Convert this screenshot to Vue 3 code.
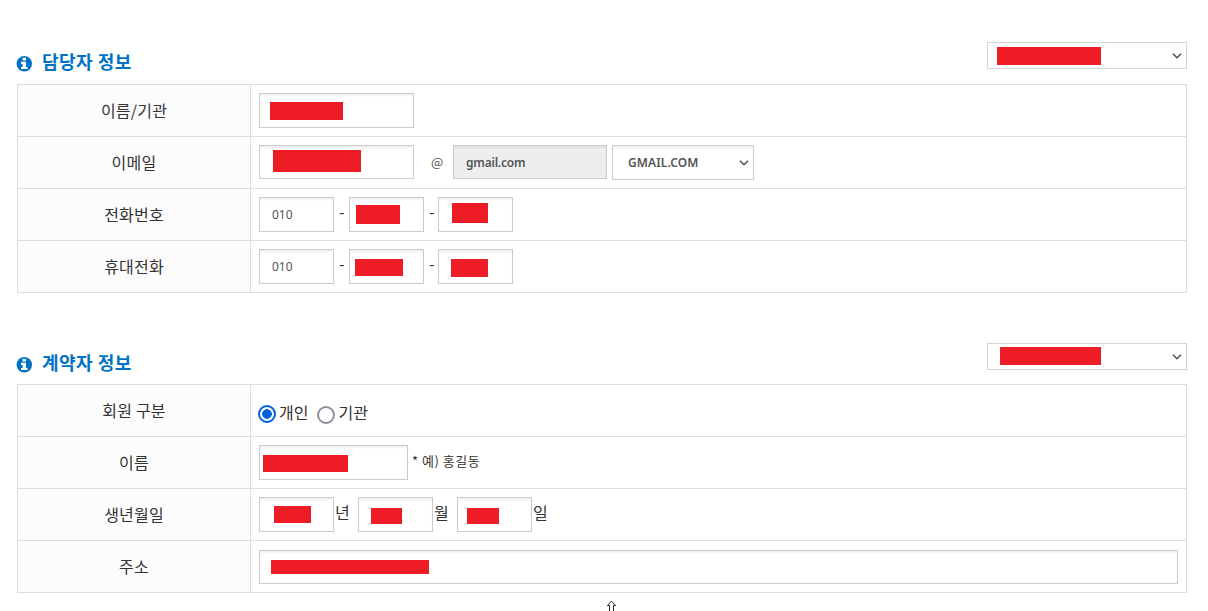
<template>
  <div class="page">
    <section v-for="s in sections" :key="s.title" class="section">
      <div class="head">
        <h2 class="title">
          <svg class="info" viewBox="0 0 16 16">
            <circle cx="8.3" cy="7.8" r="7.7" fill="#0072c6" />
            <path d="M6.6 1.8H10v2.6H6.6zM5 5.8h5V11h1.5v2.1H5V11h1.6V7.9H5z" fill="#fff" />
          </svg>
          <span>{{ s.title }}</span>
        </h2>
        <div class="picker">
          <i class="mask" :style="mask(s.mask)"></i>
          <svg class="arrow" viewBox="0 0 10 6"><path d="M1 .8l4 4 4-4" /></svg>
        </div>
      </div>
      <div class="table">
        <div v-for="row in s.rows" :key="row.label" class="row">
          <div class="label">{{ row.label }}</div>
          <div :class="['cell', row.type]">
            <template v-for="(i, n) in row.items" :key="n">
              <span v-if="i.text" :class="['text', i.type]">{{ i.text }}</span>
              <label v-else-if="i.radio" class="radio">
                <span :class="['dot', i.on ? 'on' : '']"></span>
                <span>{{ i.radio }}</span>
              </label>
              <div v-else :class="['field', i.type]">
                <i v-if="i.mask" class="mask" :style="mask(i.mask)"></i>
                <span v-else class="value">{{ i.value }}</span>
                <svg v-if="i.type == 'select'" class="arrow" viewBox="0 0 10 6"><path d="M1 .8l4 4 4-4" /></svg>
              </div>
            </template>
          </div>
        </div>
      </div>
    </section>
    <svg class="cursor" viewBox="0 0 11 12">
      <path d="M5.5 1.2L9.6 5.5H7.5V12h-4V5.5H1.4z" />
    </svg>
  </div>
</template>

<script setup>
// mask: [left, top, width, height]
const sections = [
  {
    title: '담당자 정보',
    mask: [9, 4, 104, 18],
    rows: [
      { label: '이름/기관', items: [{ type: 'id', mask: [10, 8, 73, 18] }] },
      {
        label: '이메일',
        items: [
          { type: 'id short', mask: [13, 4, 88, 22] },
          { type: 'at', text: '@' },
          { type: 'domain short', value: 'gmail.com' },
          { type: 'select', value: 'GMAIL.COM' },
        ],
      },
      {
        label: '전화번호',
        items: [
          { type: 'num', value: '010' },
          { type: 'dash', text: '-' },
          { type: 'num', mask: [6, 7, 44, 19] },
          { type: 'dash narrow', text: '-' },
          { type: 'num', mask: [13, 5, 36, 20] },
        ],
      },
      {
        label: '휴대전화',
        items: [
          { type: 'num', value: '010' },
          { type: 'dash', text: '-' },
          { type: 'num', mask: [5, 9, 48, 17] },
          { type: 'dash narrow', text: '-' },
          { type: 'num', mask: [12, 9, 37, 18] },
        ],
      },
    ],
  },
  {
    title: '계약자 정보',
    mask: [12, 3, 101, 18],
    rows: [
      { label: '회원 구분', type: 'radios', items: [{ radio: '개인', on: true }, { radio: '기관' }] },
      {
        label: '이름',
        items: [
          { type: 'name', mask: [3, 9, 85, 17] },
          { type: 'hint', text: '* 예) 홍길동' },
        ],
      },
      {
        label: '생년월일',
        items: [
          { type: 'num', mask: [14, 8, 37, 17] },
          { type: 'unit', text: '년' },
          { type: 'num', mask: [12, 10, 31, 16] },
          { type: 'unit', text: '월' },
          { type: 'num', mask: [9, 10, 32, 16] },
          { type: 'unit', text: '일' },
        ],
      },
      { label: '주소', type: 'address', items: [{ type: 'full short', mask: [11, 9, 158, 14] }] },
    ],
  },
]

const mask = ([x, y, w, h]) => ({
  margin: `${y}px 0 0 ${x}px`,
  width: `${w}px`,
  height: `${h}px`,
})
</script>

<style>
html body {
  margin: 0;
  background: #fff;
}
</style>

<style scoped>
.page {
  position: relative;
  box-sizing: border-box;
  height: 611px;
  overflow: hidden;
  padding: 0 21px 0 17px;
  color: #333;
  font-family: 'Noto Sans CJK KR', sans-serif;
  font-size: 16px;
}
.page * {
  box-sizing: border-box;
}
.head {
  display: flex;
  justify-content: space-between;
  height: 84px;
  padding-top: 42px;
}
.section + .section .head {
  height: 91px;
  padding-top: 50px;
}
.title {
  display: flex;
  align-items: center;
  gap: 10px;
  height: 40px;
  margin: 0 0 0 -1px;
  color: #0072c6;
  font-size: 18px;
  font-weight: 700;
  letter-spacing: 0.5px;
  line-height: 38px;
}
.title span {
  height: 40px;
}
.info {
  width: 16px;
  height: 16px;
  margin-top: 4px;
}
.picker {
  display: flex;
  width: 200px;
  height: 27px;
  border: 1px solid #d5d5d8;
}
.section + .section .picker {
  margin-top: 0;
}
.arrow {
  flex: none;
  width: 10px;
  height: 6px;
  margin: 10px 4px 0 auto;
  fill: none;
  stroke: #4a4a52;
  stroke-width: 1.4;
}
.mask {
  flex: none;
  background: #ee1c24;
}
.table {
  border: 1px solid #dcdcdc;
  border-bottom: 0;
}
.row {
  display: flex;
  height: 52px;
  border-bottom: 1px solid #dcdcdc;
}
.label {
  width: 233px;
  border-right: 1px solid #dcdcdc;
  background: #fcfcfc;
  line-height: 51px;
  text-align: center;
  letter-spacing: 0.2px;
}
.cell {
  flex: 1;
  display: flex;
  align-items: flex-start;
  padding: 8px 8px 0;
}
.address {
  padding-top: 9px;
}
.field {
  display: flex;
  width: 75px;
  height: 35px;
  border: 1px solid #ccc;
  background: #fff;
  box-shadow: inset 0 2px 2px rgba(0, 0, 0, 0.06);
  color: #555;
  font-family: 'Noto Sans', 'Noto Sans CJK KR', sans-serif;
  font-size: 12px;
  line-height: 33px;
}
.value {
  padding-left: 12px;
}
.id {
  width: 155px;
}
.short {
  height: 34px;
}
.domain {
  width: 154px;
  background: #eee;
  font-weight: 600;
  letter-spacing: -0.2px;
}
.select {
  width: 142px;
  margin-left: 5px;
  font-weight: 600;
  letter-spacing: 0.1px;
}
.select .value {
  padding-left: 15px;
}
.select .arrow {
  margin-top: 14px;
}
.name {
  width: 149px;
}
.full {
  width: 919px;
}
.text {
  line-height: 32px;
}
.at {
  width: 39px;
  padding-left: 17px;
  color: #555;
  font-size: 13px;
  line-height: 34px;
}
.dash {
  width: 15px;
  padding-left: 5px;
  line-height: 29px;
}
.dash.narrow {
  width: 14px;
  padding-left: 5px;
}
.hint {
  padding-left: 4px;
  font-size: 13px;
  letter-spacing: 0.5px;
}
.unit {
  width: 24px;
  padding-left: 1px;
  line-height: 30px;
}
.radios {
  padding: 12px 0 0 7px;
}
.radio {
  display: flex;
  margin-right: 8px;
  line-height: 31px;
}
.dot {
  width: 18px;
  height: 18px;
  margin: 9px 3px 0 0;
  border: 2px solid #8f8f9d;
  border-radius: 50%;
}
.radio + .radio {
  margin-left: 1px;
}
.dot.on {
  margin-top: 8px;
  border-color: #0060df;
  background: radial-gradient(circle, #0060df 4.5px, #fff 5px);
}
.cursor {
  position: absolute;
  left: 606px;
  top: 600px;
  width: 11px;
  height: 12px;
  fill: #fff;
  stroke: #223;
  stroke-width: 1;
}
</style>
